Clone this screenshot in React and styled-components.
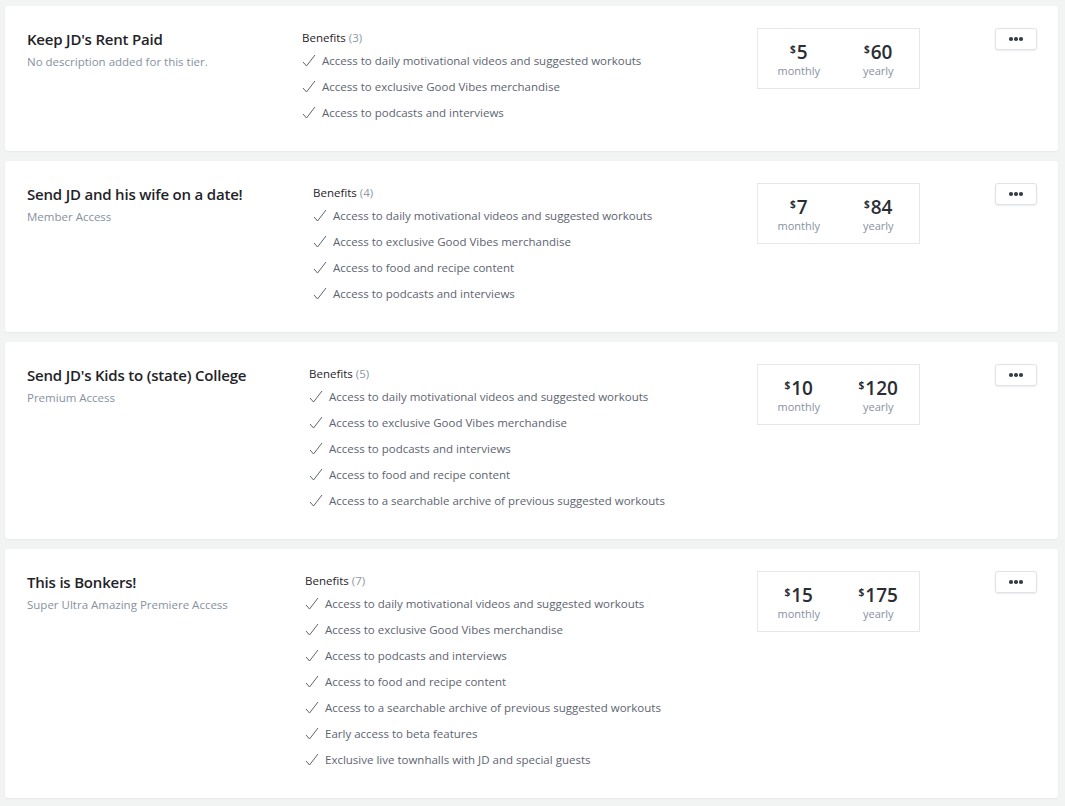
import React from 'react'
import styled, { createGlobalStyle } from 'styled-components'

const GlobalStyle = createGlobalStyle`
  * { box-sizing: border-box; }
  body {
    margin: 0;
    background: #f2f3f3;
    font-family: "Open Sans", "Liberation Sans", sans-serif;
    -webkit-font-smoothing: antialiased;
  }
`

const Page = styled.div`
  padding: 6px 7px 8px 5px;
  display: flex;
  flex-direction: column;
  gap: 10px;
`

const Card = styled.div`
  display: flex;
  align-items: flex-start;
  background: #fff;
  border-radius: 3px;
  box-shadow: 0 1px 2px rgba(0, 0, 0, 0.05);
  padding: 22px 21px 26px 22px;
`

const Info = styled.div`
  width: ${props => props.w}px;
  flex-shrink: 0;
  padding-top: 1px;
`

const Title = styled.h3`
  margin: 0;
  font-size: 15px;
  line-height: 20px;
  font-weight: 600;
  color: #1f2328;
  letter-spacing: -0.2px;
`

const Subtitle = styled.div`
  margin-top: 5px;
  font-size: 11.5px;
  line-height: 16px;
  color: #8791a0;
`

const Benefits = styled.div`
  flex: 1;
`

const BenefitsHead = styled.div`
  font-size: 11.5px;
  line-height: 16px;
  color: #1f2328;
  margin: 2px 0 1px;
  span {
    color: #8e97a5;
  }
`

const BenefitRow = styled.div`
  display: flex;
  align-items: center;
  height: 26px;
  font-size: 11.5px;
  color: #5d6470;
  svg {
    flex-shrink: 0;
    margin-right: 6px;
  }
`

const PriceBox = styled.div`
  display: flex;
  width: 163px;
  height: 61px;
  border: 1px solid #e5e7ea;
  padding: 0 1px;
`

const PriceCol = styled.div`
  flex: 1;
  display: flex;
  flex-direction: column;
  align-items: center;
  padding-top: 11px;
`

const Amount = styled.div`
  display: flex;
  align-items: flex-start;
  font-size: 19px;
  line-height: 24px;
  font-weight: 600;
  color: #2a2e35;
  sup {
    font-size: 10px;
    line-height: 12px;
    font-weight: 700;
    margin-right: 1px;
    margin-top: 3px;
  }
`

const Period = styled.div`
  font-size: 11px;
  line-height: 14px;
  color: #8791a0;
`

const MoreButton = styled.button`
  margin-left: 75px;
  width: 42px;
  height: 22px;
  border: 1px solid #dfe2e6;
  border-radius: 3px;
  background: #fff;
  box-shadow: 0 1px 2px rgba(0, 0, 0, 0.08);
  display: flex;
  align-items: center;
  justify-content: center;
  gap: 1.5px;
  padding: 0;
  span {
    width: 3.5px;
    height: 3.5px;
    border-radius: 50%;
    background: #3a3f47;
  }
`

const Check = () => (
  <svg width="14" height="13" viewBox="0 0 14 13">
    <polyline points="1,8 4.5,12 13,1" fill="none" stroke="#5d6470" strokeWidth="1" />
  </svg>
)

const tiers = [
  {
    name: "Keep JD's Rent Paid",
    desc: 'No description added for this tier.',
    w: 275,
    monthly: 5,
    yearly: 60,
    benefits: [
      'Access to daily motivational videos and suggested workouts',
      'Access to exclusive Good Vibes merchandise',
      'Access to podcasts and interviews',
    ],
  },
  {
    name: 'Send JD and his wife on a date!',
    desc: 'Member Access',
    w: 286,
    monthly: 7,
    yearly: 84,
    benefits: [
      'Access to daily motivational videos and suggested workouts',
      'Access to exclusive Good Vibes merchandise',
      'Access to food and recipe content',
      'Access to podcasts and interviews',
    ],
  },
  {
    name: "Send JD's Kids to (state) College",
    desc: 'Premium Access',
    w: 282,
    monthly: 10,
    yearly: 120,
    benefits: [
      'Access to daily motivational videos and suggested workouts',
      'Access to exclusive Good Vibes merchandise',
      'Access to podcasts and interviews',
      'Access to food and recipe content',
      'Access to a searchable archive of previous suggested workouts',
    ],
  },
  {
    name: 'This is Bonkers!',
    desc: 'Super Ultra Amazing Premiere Access',
    w: 278,
    monthly: 15,
    yearly: 175,
    benefits: [
      'Access to daily motivational videos and suggested workouts',
      'Access to exclusive Good Vibes merchandise',
      'Access to podcasts and interviews',
      'Access to food and recipe content',
      'Access to a searchable archive of previous suggested workouts',
      'Early access to beta features',
      'Exclusive live townhalls with JD and special guests',
    ],
  },
]

const TierCard = ({ tier }) => (
  <Card>
    <Info w={tier.w}>
      <Title>{tier.name}</Title>
      <Subtitle>{tier.desc}</Subtitle>
    </Info>
    <Benefits>
      <BenefitsHead>
        Benefits <span>({tier.benefits.length})</span>
      </BenefitsHead>
      {tier.benefits.map(b => (
        <BenefitRow key={b}>
          <Check />
          {b}
        </BenefitRow>
      ))}
    </Benefits>
    <PriceBox>
      <PriceCol>
        <Amount><sup>$</sup>{tier.monthly}</Amount>
        <Period>monthly</Period>
      </PriceCol>
      <PriceCol>
        <Amount><sup>$</sup>{tier.yearly}</Amount>
        <Period>yearly</Period>
      </PriceCol>
    </PriceBox>
    <MoreButton>
      <span />
      <span />
      <span />
    </MoreButton>
  </Card>
)

export default function App() {
  return (
    <>
      <GlobalStyle />
      <Page>
        {tiers.map(t => (
          <TierCard key={t.name} tier={t} />
        ))}
      </Page>
    </>
  )
}
